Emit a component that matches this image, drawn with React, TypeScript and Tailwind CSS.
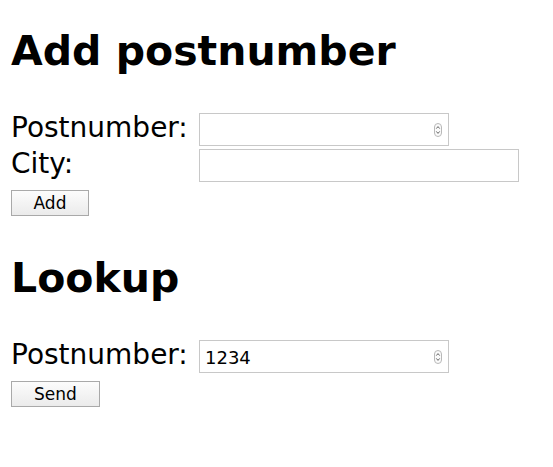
import React from "react";

function Spinner() {
  return (
    <svg
      className="absolute right-[6px] top-1/2 -translate-y-1/2"
      width="8"
      height="14"
      viewBox="0 0 8 14"
    >
      <rect x="0.5" y="0.5" width="7" height="13" rx="3.5" fill="#fbfbfb" stroke="#b8b8b8" />
      <path d="M2.3 5.6 L4 3.6 L5.7 5.6" fill="none" stroke="#555" strokeWidth="0.9" />
      <path d="M2.3 8.4 L4 10.4 L5.7 8.4" fill="none" stroke="#555" strokeWidth="0.9" />
    </svg>
  );
}

function NumInput({ value }: { value?: string }) {
  return (
    <div className="relative h-[33px] w-[250px] border border-[#c8c8c8] bg-white">
      <span className="absolute left-[5px] top-[7px] text-[18px] leading-[20px] text-black">
        {value}
      </span>
      <Spinner />
    </div>
  );
}

function Btn({ children, w }: { children: React.ReactNode; w: string }) {
  return (
    <button
      className={`block h-[26px] ${w} border border-[#a9a9a9] bg-gradient-to-b from-[#fcfcfc] to-[#ebebeb] text-[17px] leading-none text-black`}
    >
      {children}
    </button>
  );
}

export default function App() {
  return (
    <div
      className="min-h-[467px] bg-white pl-[11px] text-black"
      style={{ fontFamily: '"DejaVu Sans", Verdana, sans-serif' }}
    >
      <h1 className="pt-[31px] text-[41px] font-bold leading-[41px]">Add postnumber</h1>
      <div className="mt-[41px] flex flex-col gap-[3px]">
        <div className="flex items-start">
          <label className="w-[188px] text-[28px] leading-[30px]">Postnumber:</label>
          <NumInput />
        </div>
        <div className="flex items-start">
          <label className="w-[188px] text-[28px] leading-[30px]">City:</label>
          <div className="h-[33px] w-[320px] border border-[#c8c8c8] bg-white" />
        </div>
      </div>
      <div className="mt-[8px]">
        <Btn w="w-[78px]">Add</Btn>
      </div>
      <h1 className="mt-[42px] text-[41px] font-bold leading-[41px]">Lookup</h1>
      <div className="mt-[41px] flex items-start">
        <label className="w-[188px] text-[28px] leading-[30px]">Postnumber:</label>
        <NumInput value="1234" />
      </div>
      <div className="mt-[8px]">
        <Btn w="w-[89px]">Send</Btn>
      </div>
    </div>
  );
}
